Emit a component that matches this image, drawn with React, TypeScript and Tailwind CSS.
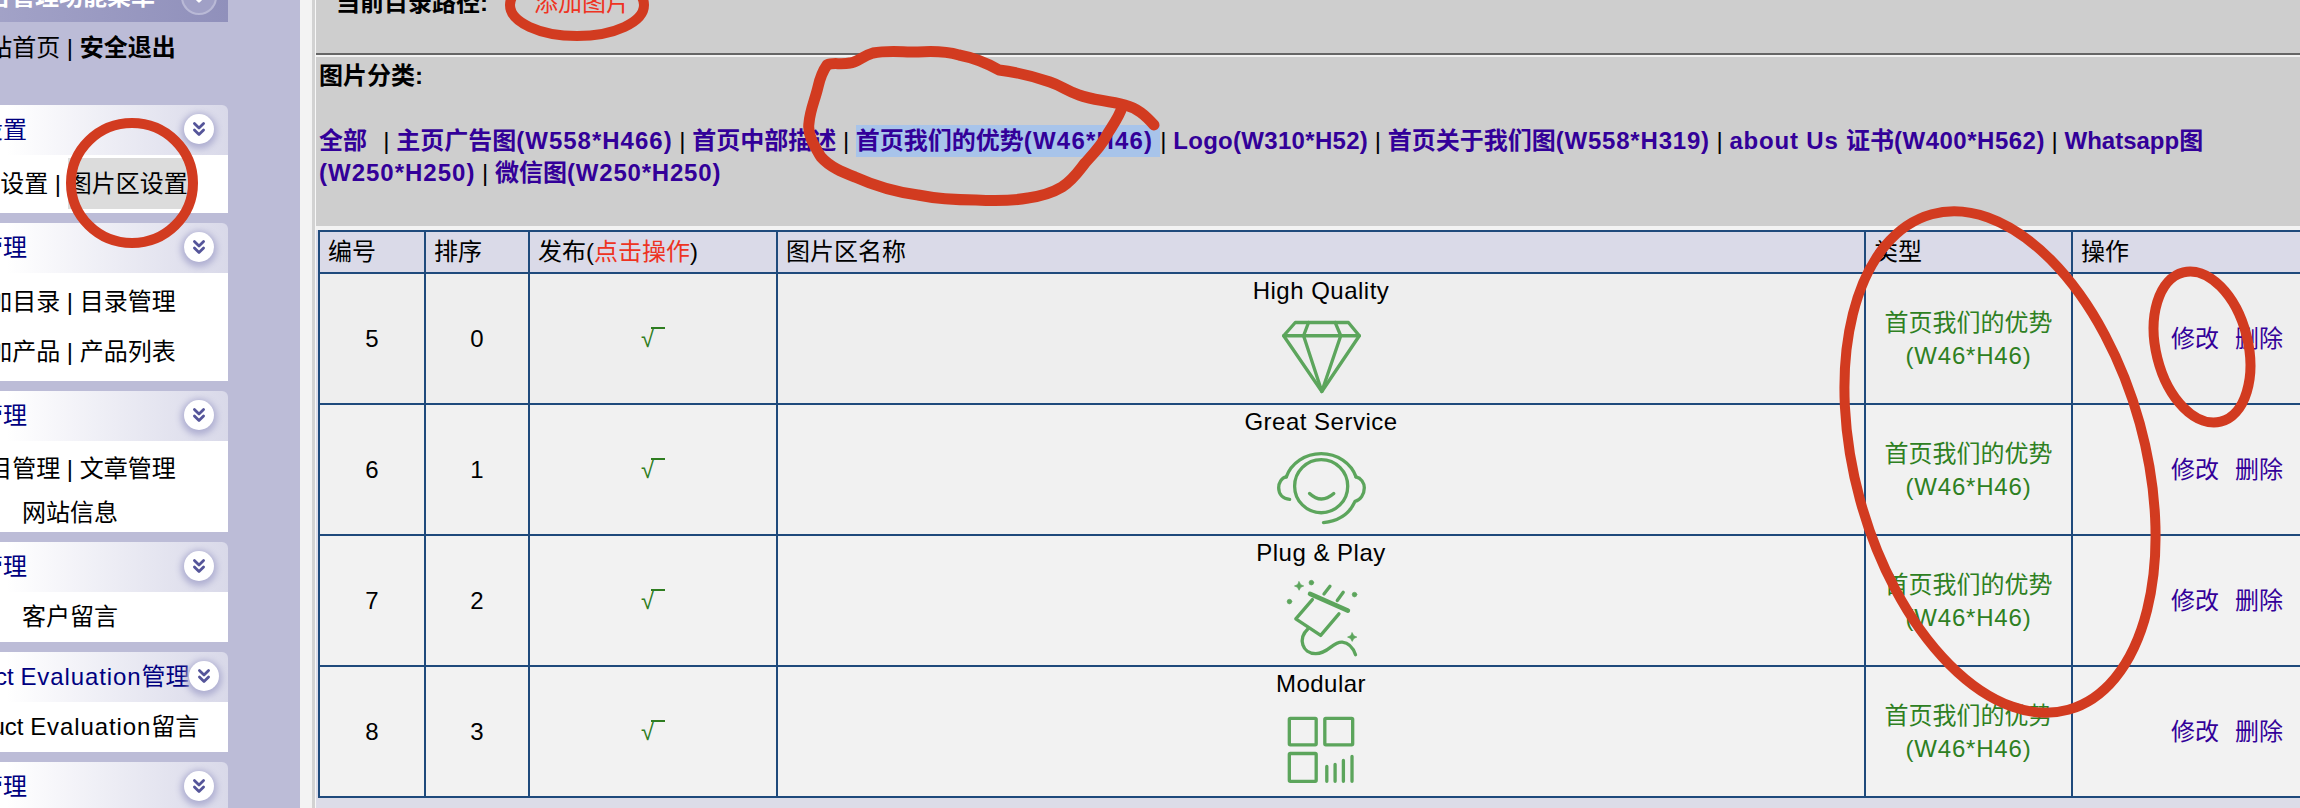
import { Fragment, type ReactNode } from "react";
import { ChevronsDown } from "lucide-react";

function Chevron() {
  return (
    <span className="mb-[3px] flex h-[30px] w-[30px] shrink-0 items-center justify-center rounded-full bg-white shadow-[0_2px_6px_3px_#b0b0d2]">
      <ChevronsDown size={22} strokeWidth={3} className="text-[#55559a]" />
    </span>
  );
}

function Panel({ title, bodyClass, children }: { title: ReactNode; bodyClass: string; children: ReactNode }) {
  return (
    <div className="mb-[10px] w-[316px]">
      <div className="flex h-[50px] items-center justify-between rounded-tr-[6px] bg-gradient-to-r from-white from-[30%] to-[#d9d9e9] pl-[19px] pr-[14px] text-[#000080]">
        <span className="whitespace-nowrap">{title}</span>
        <Chevron />
      </div>
      <div className={`bg-white text-center text-black ${bodyClass}`}>{children}</div>
    </div>
  );
}

function Sidebar() {
  return (
    <aside className="h-[808px] w-[300px] shrink-0 overflow-hidden bg-[#bcbcd7]">
      <div className="-mt-[28px] -ml-[88px] w-[388px]">
        <div className="flex h-[50px] w-[316px] items-center justify-between bg-gradient-to-r from-[#a9a9cc] to-[#9090bb] pl-[51px] pr-[11px] font-bold text-white">
          <span>后台管理功能菜单</span>
          <span className="flex h-[36px] w-[36px] items-center justify-center rounded-full border-2 border-[#b9b9d6] bg-[#a0a0c6]">
            <ChevronsDown size={18} strokeWidth={3} className="text-white" />
          </span>
        </div>
        <div className="flex h-[50px] w-[316px] items-center justify-center pt-[2px] text-black">
          网站首页&nbsp;|&nbsp;<b>安全退出</b>
        </div>
        <div className="h-[33px]" />
        <Panel title="系统设置" bodyClass="h-[58px] leading-[58px]">
          网站设置 | <span className="inline-block h-[51px] bg-[#dcdcdc] leading-[51px]">图片区设置</span>
        </Panel>
        <Panel title="产品管理" bodyClass="h-[108px] py-[4px] leading-[50px]">
          <div>添加目录 | 目录管理</div>
          <div>添加产品 | 产品列表</div>
        </Panel>
        <Panel title="文章管理" bodyClass="h-[91px] pt-[3px]">
          <div className="leading-[50px]">栏目管理 | 文章管理</div>
          <div className="leading-[38px]">网站信息</div>
        </Panel>
        <Panel title="留言管理" bodyClass="h-[50px] leading-[50px]">
          客户留言
        </Panel>
        <Panel title={<>Product <span className="tracking-[0.9px]">Evaluation</span>管理</>} bodyClass="h-[50px] leading-[50px]">
          Product <span className="tracking-[0.9px]">Evaluation</span>留言
        </Panel>
        <Panel title="用户管理" bodyClass="h-[50px] leading-[50px]">
          用户列表
        </Panel>
      </div>
    </aside>
  );
}

const links = [
  { cn: "全部\u00a0", en: "", track: "" },
  { cn: "主页广告图", en: "(W558*H466)", track: "tracking-[1px]" },
  { cn: "首页中部描述", en: "", track: "" },
  { cn: "首页我们的优势", en: "(W46*H46)", track: "tracking-[1.2px]" },
  { cn: "", en: "Logo(W310*H52)", track: "tracking-[0.3px]" },
  { cn: "首页关于我们图", en: "(W558*H319)", track: "tracking-[0.8px]" },
  { cn: "", en: "about Us ", track: "tracking-[0.8px]" },
];

function Sep({ tight }: { tight?: boolean }) {
  return <span className="font-normal text-black">{tight ? "" : "\u00a0"}|&nbsp;</span>;
}

function FilterRow() {
  return (
    <div className="h-[169px] bg-[#cecece] pl-[3px] pt-[2px]">
      <div className="font-bold leading-[33px] text-black">图片分类:</div>
      <div className="mt-[33px] whitespace-nowrap font-bold leading-[32px] text-[#330099]">
        {links.map((link, i) => (
          <Fragment key={i}>
            <span className={i === 3 ? "inline-block bg-[#a8c4ea] pr-[7px]" : ""}>
              {link.cn}
              <span className={link.track}>{link.en}</span>
            </span>
            {i === 0 && <span className="inline-block w-[3px]" />}
            {i < links.length - 1 && <Sep tight={i === 3} />}
          </Fragment>
        ))}
        证书<span className="tracking-[0.5px]">(W400*H562)</span>
        <Sep />
        Whatsapp图
        <br />
        <span className="tracking-[1px]">(W250*H250)</span>
        <Sep />
        微信图<span className="tracking-[0.8px]">(W250*H250)</span>
      </div>
    </div>
  );
}

const iconClass = "fill-none stroke-[#5ca55c] stroke-[10] [stroke-linecap:round] [stroke-linejoin:round] blur-[0.4px]";

function Diamond() {
  return (
    <svg viewBox="232 182 244 228" width={81} height={76} className={iconClass}>
      <path d="M275 192H435L468 232L355 400L240 232Z" />
      <path d="M240 232H468" />
      <path d="M315 192L300 232L355 400L412 232L395 192" />
    </svg>
  );
}

function Headset() {
  return (
    <svg viewBox="224 565 274 235" width={91} height={78} className={iconClass}>
      <circle cx="360" cy="680" r="80" />
      <path d="M255 652A110 100 0 0 1 465 652" />
      <path d="M255 652C240 655 232 670 232 685C232 705 245 718 265 720" />
      <path d="M465 652C480 655 490 670 490 685C490 705 478 722 462 726C445 765 410 785 367 790" />
      <path d="M325 702Q360 735 398 702" />
    </svg>
  );
}

function Plug() {
  return (
    <svg viewBox="240 150 225 235" width={75} height={78} className={iconClass}>
      <path d="M318 195L432 245" strokeWidth={14} />
      <path d="M325 212L275 270L350 320L405 255" />
      <path d="M360 195L378 172M400 215L418 190" />
      <path d="M312 300C280 330 295 375 335 375C375 375 385 338 415 340C435 342 448 358 455 378" />
      <path d="M285 158L290 167L299 171L290 175L285 184L280 175L271 171L280 167Z" className="fill-[#5ca55c] stroke-[2]" />
      <path d="M445 312L450 321L459 325L450 329L445 338L440 329L431 325L440 321Z" className="fill-[#5ca55c] stroke-[2]" />
      <circle cx="322" cy="161" r="7" className="fill-[#5ca55c] stroke-[2]" />
      <circle cx="256" cy="218" r="7" className="fill-[#5ca55c] stroke-[2]" />
      <circle cx="452" cy="197" r="7" className="fill-[#5ca55c] stroke-[2]" />
    </svg>
  );
}

function Modular() {
  return (
    <svg viewBox="260 560 205 205" width={68} height={68} className={iconClass}>
      <rect x="267" y="567" width="81" height="80" rx="3" />
      <rect x="374" y="567" width="84" height="80" rx="3" />
      <rect x="267" y="673" width="81" height="84" rx="3" />
      <path d="M380 712V757M405 706V757M430 694V757M456 682V757" />
    </svg>
  );
}

function Check() {
  return (
    <span className="relative inline-block h-[24px] w-[24px] text-left leading-[24px] text-[#2e7d20]">
      √
      <span className="absolute left-[10px] top-[0px] h-[2px] w-[14px] bg-[#2e7d20]" />
    </span>
  );
}

const rows = [
  { id: 5, sort: 0, name: "High Quality", icon: <Diamond />, bg: "bg-[#eeeeee]", box: "pt-[4px]" },
  { id: 6, sort: 1, name: "Great Service", icon: <Headset />, bg: "bg-[#f1f1f1]", box: "pt-[1px]" },
  { id: 7, sort: 2, name: "Plug & Play", icon: <Plug />, bg: "bg-[#f2f2f2]", box: "pt-[2px]" },
  { id: 8, sort: 3, name: "Modular", icon: <Modular />, bg: "bg-[#f2f2f2]", box: "pt-[4px]" },
];

const cell = "border-2 border-[#1f4a7c] text-center";
const head = "border-2 border-[#1f4a7c] pl-[8px] text-left font-normal";

function ImageTable() {
  return (
    <table className="ml-[2px] w-[2063px] table-fixed border-collapse text-black">
      <colgroup>
        <col className="w-[106px]" />
        <col className="w-[104px]" />
        <col className="w-[248px]" />
        <col className="w-[1088px]" />
        <col className="w-[207px]" />
        <col className="w-[310px]" />
      </colgroup>
      <thead>
        <tr className="h-[42px] bg-[#dadae8]">
          <th className={head}>编号</th>
          <th className={head}>排序</th>
          <th className={head}>
            发布(<span className="text-[#ee3322]">点击操作</span>)
          </th>
          <th className={head}>图片区名称</th>
          <th className={head}>类型</th>
          <th className={head}>操作</th>
        </tr>
      </thead>
      <tbody>
        {rows.map((row) => (
          <tr key={row.id} className={`h-[131px] ${row.bg}`}>
            <td className={cell}>{row.id}</td>
            <td className={cell}>{row.sort}</td>
            <td className={cell}>
              <Check />
            </td>
            <td className={`${cell} p-0 align-top`}>
              <div className="h-[33px] leading-[33px] tracking-[0.5px]">{row.name}</div>
              <div className={`flex h-[96px] items-center justify-center ${row.box}`}>{row.icon}</div>
            </td>
            <td className={`${cell} leading-[33px] text-[#2e8022]`}>
              首页我们的优势
              <br />
              <span className="tracking-[0.8px]">(W46*H46)</span>
            </td>
            <td className={`${cell} text-[#330099]`}>
              修改<span className="ml-[16px]">删除</span>
            </td>
          </tr>
        ))}
      </tbody>
    </table>
  );
}

// 截图上的红色手绘标注
function Annotations() {
  return (
    <svg width={2300} height={808} className="pointer-events-none absolute left-0 top-0 fill-none stroke-[#d23b20] stroke-[10] [stroke-linecap:round]">
      <ellipse cx={132} cy={183} rx={61} ry={60} />
      <ellipse cx={577} cy={5} rx={67} ry={31} />
      <path strokeWidth={11} d="M1154 125C1145 115 1137 108 1125 105C1105 100 1092 100 1079 95C1065 90 1062 86 1050 82C1030 75 1015 72 999 70C985 62 975 58 959 55C945 51 932 51 918 52C900 52 888 50 873 53C862 56 858 62 850 63C840 65 833 62 827 65C822 72 820 78 818 87C815 100 810 110 809 123C807 135 815 147 821 157C830 167 842 172 855 177C875 186 895 192 918 195C938 199 955 200 976 200C995 201 1012 201 1028 198C1042 196 1052 193 1062 187C1073 180 1078 172 1085 163C1095 152 1102 145 1108 133C1115 122 1120 115 1122 107" />
      <ellipse cx={2000} cy={462} rx={145} ry={257} transform="rotate(-15.4 2000 462)" />
      <ellipse cx={2202} cy={347} rx={46} ry={77} transform="rotate(-14 2202 347)" />
    </svg>
  );
}

export default function App() {
  return (
    <div className="relative flex h-[808px] w-[2300px] overflow-hidden bg-[#f3f3f3] text-[24px] [font-family:'Liberation_Sans','Noto_Sans_CJK_SC',sans-serif]">
      <Sidebar />
      <div className="w-[12px] shrink-0 bg-[#f3f3f3]" />
      <div className="w-[3px] shrink-0 bg-[#d2d2d2]" />
      <div className="w-[1px] shrink-0 bg-[#f7f7f7]" />
      <main className="min-w-0 flex-1 overflow-hidden bg-[#dcdce8]">
        <div className="h-[53px] overflow-hidden bg-[#cecece]">
          <div className="-mt-[14px] flex h-[33px] items-center whitespace-nowrap pl-[20px] leading-[33px] text-black">
            <b>当前目录路径:</b>
            <span className="ml-[46px] text-[#ee3322]">添加图片</span>
          </div>
        </div>
        <div className="h-[2px] bg-[#666666]" />
        <div className="h-[2px] bg-[#f3f3f3]" />
        <FilterRow />
        <div className="h-[4px] bg-[#f3f3f3]" />
        <ImageTable />
      </main>
      <Annotations />
    </div>
  );
}
